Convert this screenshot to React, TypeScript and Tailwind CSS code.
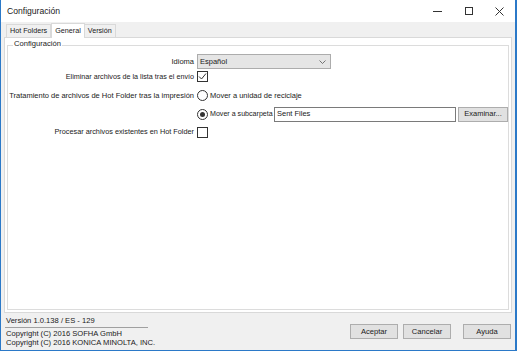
import React from 'react';

const font = { fontFamily: '"Liberation Sans", Arial, sans-serif' };

const Checkbox = ({ checked }: { checked?: boolean }) => (
  <div className="w-[11px] h-[11px] border border-[#333333] bg-white flex items-center justify-center shrink-0">
    {checked && (
      <svg width="9" height="9" viewBox="0 0 9 9">
        <path d="M1 4.5 L3.5 7 L8 1.5" fill="none" stroke="#333333" strokeWidth="1" />
      </svg>
    )}
  </div>
);

const Radio = ({ checked }: { checked?: boolean }) => (
  <div className="w-[11px] h-[11px] rounded-full border border-[#333333] bg-white flex items-center justify-center shrink-0">
    {checked && <div className="w-[5px] h-[5px] rounded-full bg-[#333333]" />}
  </div>
);

const Button = ({ label, className }: { label: string; className?: string }) => (
  <button className={`w-[48px] h-[15px] border border-[#adadad] bg-[#e1e1e1] text-[7.6px] text-[#1a1a1a] leading-none ${className ?? ''}`}>
    {label}
  </button>
);

export default function App() {
  return (
    <div
      className="w-[517px] h-[351px] bg-[#f0f0f0] border-l border-b border-r-2 border-[#2b79c8] flex flex-col text-[#1a1a1a] overflow-hidden"
      style={font}
    >
      {/* Title bar */}
      <div className="h-[22px] bg-white flex items-center justify-between shrink-0">
        <span className="pl-[6px] text-[8.6px]">Configuración</span>
        <div className="flex items-center h-full">
          <div className="w-[31px] h-full flex items-center justify-center">
            <div className="w-[9px] h-px bg-[#333333]" />
          </div>
          <div className="w-[31px] h-full flex items-center justify-center">
            <div className="w-[8px] h-[8px] border border-[#333333]" />
          </div>
          <div className="w-[31px] h-full flex items-center justify-center">
            <svg width="9" height="9" viewBox="0 0 9 9">
              <path d="M0.5 0.5 L8.5 8.5 M8.5 0.5 L0.5 8.5" stroke="#333333" strokeWidth="1" />
            </svg>
          </div>
        </div>
      </div>

      {/* Tabs */}
      <div className="flex items-end h-[15px] pl-[5px] pt-[1px] shrink-0 text-[7.2px]">
        <div className="h-[13px] px-[3px] border border-b-0 border-[#d9d9d9] bg-[#f0f0f0] flex items-center">Hot Folders</div>
        <div className="h-[15px] px-[3px] border border-b-0 border-[#d9d9d9] bg-white flex items-center -mb-px relative z-10">General</div>
        <div className="h-[13px] px-[3px] border border-b-0 border-l-0 border-[#d9d9d9] bg-[#f0f0f0] flex items-center">Versión</div>
      </div>

      {/* Tab panel */}
      <div className="mx-[3px] h-[276px] bg-white border border-[#d9d9d9] px-[2px] pt-[6px] pb-[2px] flex flex-col shrink-0">
        <div className="relative flex-1 border border-[#dcdcdc] mt-px">
          <span className="absolute -top-[6px] left-[5px] bg-white px-[1px] text-[7.6px] leading-none">Configuración</span>
          <div className="grid grid-cols-[186px_1fr] gap-x-[3px] pt-[8px] text-[7.5px] items-center">
            <div className="text-right h-[15px] leading-[15px]">Idioma</div>
            <div className="h-[15px] flex items-center">
              <div className="w-[134px] h-[15px] border border-[#acacac] bg-[#e5e5e5] flex items-center justify-between px-[2px]">
                <span>Español</span>
                <svg width="7" height="4" viewBox="0 0 7 4" className="mr-[2px]">
                  <path d="M0.5 0.5 L3.5 3.5 L6.5 0.5" fill="none" stroke="#555555" strokeWidth="0.8" />
                </svg>
              </div>
            </div>

            <div className="text-right h-[15px] leading-[15px] text-[7.2px]">Eliminar archivos de la lista tras el envío</div>
            <div className="h-[15px] flex items-center">
              <Checkbox checked />
            </div>

            <div className="text-right h-[19px] leading-[19px] mt-[2px] whitespace-nowrap">Tratamiento de archivos de Hot Folder tras la impresión</div>
            <div className="h-[19px] mt-[2px] flex items-center gap-[2px] whitespace-nowrap">
              <Radio />
              <span>Mover a unidad de reciclaje</span>
            </div>

            <div className="h-[18px]" />
            <div className="h-[18px] flex items-center whitespace-nowrap">
              <div className="w-[77px] flex items-center shrink-0">
                <Radio checked />
                <span className="ml-[2px] text-[7.1px]">Mover a subcarpeta</span>
              </div>
              <div className="w-[182px] shrink-0 h-[15px] border border-[#7a7a7a] bg-white flex items-center px-[2px]">Sent Files</div>
              <div className="ml-[2px] w-[50px] shrink-0 h-[15px] border border-[#adadad] bg-[#e1e1e1] flex items-center justify-center">Examinar...</div>
            </div>

            <div className="text-right h-[18px] leading-[18px] text-[7.3px]">Procesar archivos existentes en Hot Folder</div>
            <div className="h-[18px] flex items-center">
              <Checkbox />
            </div>
          </div>
        </div>
      </div>

      {/* Footer */}
      <div className="h-[36px] flex justify-between pl-[4px] pt-[3px] text-[7.6px] shrink-0">
        <div className="flex flex-col w-[143px]">
          <div className="h-[10px] leading-[10px] pl-px">Versión 1.0.138 / ES - 129</div>
          <div className="h-px bg-[#a0a0a0] mt-px mb-px" />
          <div className="h-[9px] leading-[9px] pl-px whitespace-nowrap">Copyright (C) 2016 SOFHA GmbH</div>
          <div className="h-[9px] leading-[9px] pl-px whitespace-nowrap">Copyright (C) 2016 KONICA MINOLTA, INC.</div>
        </div>
        <div className="flex items-start pt-[8px] pr-[4px]">
          <Button label="Aceptar" />
          <Button label="Cancelar" className="ml-[5px]" />
          <Button label="Ayuda" className="ml-[12px]" />
        </div>
      </div>
    </div>
  );
}
